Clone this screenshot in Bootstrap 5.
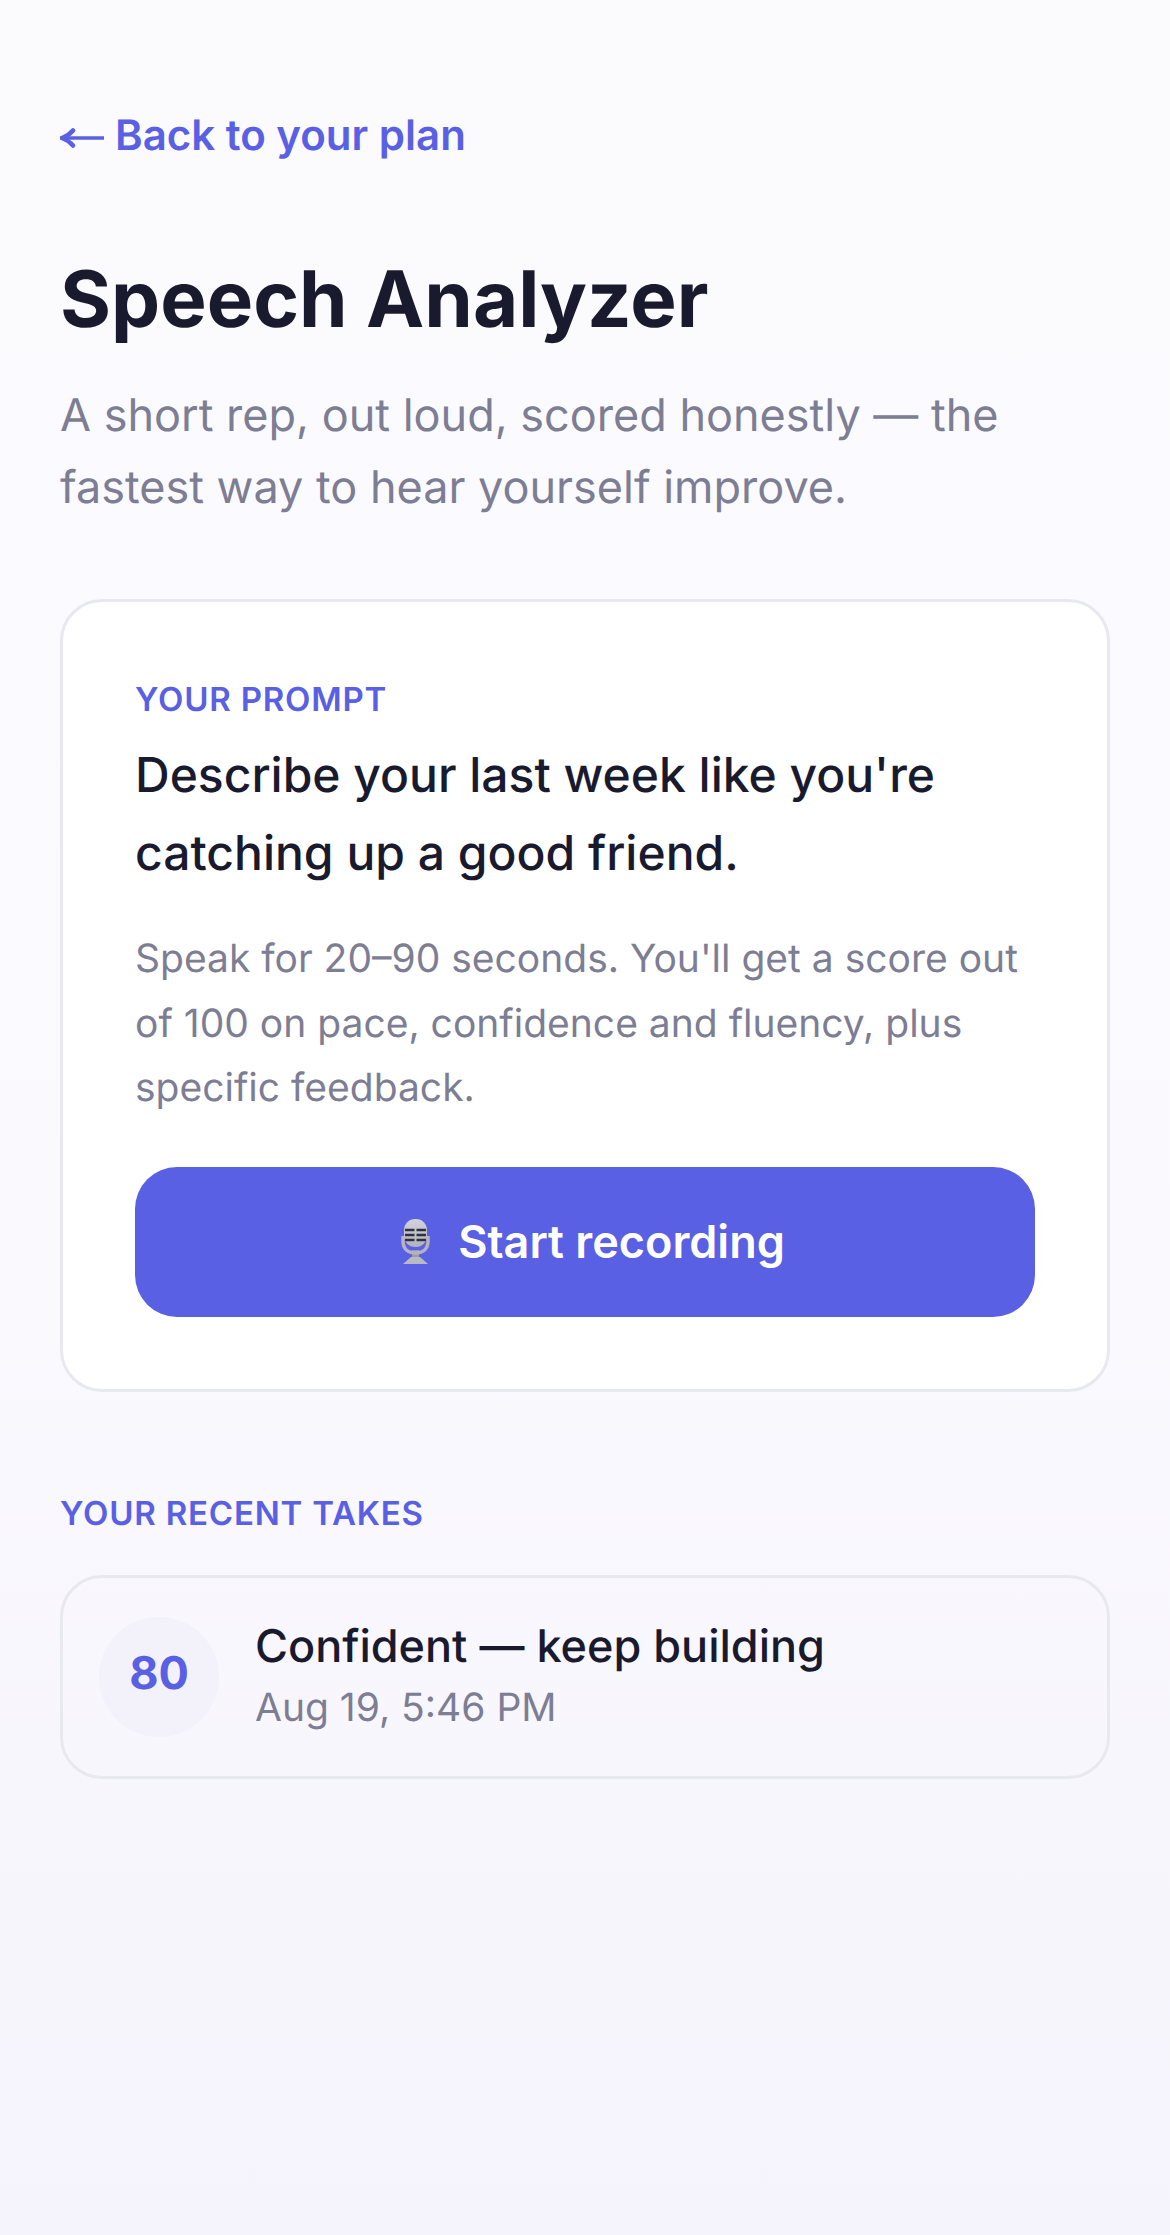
<!DOCTYPE html>
<html lang="en">
<head>
  <meta charset="UTF-8">
  <meta name="viewport" content="width=device-width, initial-scale=1.0">
  <title>Speech Analyzer</title>
  <link href="https://cdn.jsdelivr.net/npm/bootstrap@5.3.2/dist/css/bootstrap.min.css" rel="stylesheet">
  <style>
    body {
      font-family: Inter, "Liberation Sans", sans-serif;
      background: linear-gradient(180deg, #fbfbfe 0%, #faf9fe 60%, #f5f3fb 100%);
      color: #1a1a2e;
      min-height: 2235px;
      text-rendering: geometricPrecision;
    }
    .page-wrap { padding: 109px 60px 60px; }
    .back-link { color: #5a60e3; font-size: 42px; font-weight: 600; line-height: 54px; text-decoration: none; gap: 11px; }
    .back-arrow { margin-top: 3px; }
    .page-title { font-size: 78px; font-weight: 700; line-height: 94px; margin: 89px 0 0; }
    .page-sub { font-size: 45px; line-height: 72px; color: #7d7d94; margin: 33px 0 0; }
    .prompt-box { background: #fff; border: 3px solid #e8e8f0; border-radius: 42px; padding: 75px 72px 72px; margin-top: 76px; }
    .eyebrow { color: #5a60e3; font-size: 33px; font-weight: 600; letter-spacing: 0.8px; line-height: 44px; }
    .prompt-text { font-size: 48px; font-weight: 500; line-height: 78px; margin: 15px 0 0; }
    .prompt-note { font-size: 39px; line-height: 64.5px; color: #7d7d94; margin: 35px 0 0; }
    .rec-btn { background: #5a60e3; color: #fff; font-size: 45px; font-weight: 600; border: 0; border-radius: 42px; height: 150px; margin-top: 46px; gap: 27px; padding-left: 28px; }
    .rec-btn:hover { background: #5a60e3; color: #fff; }
    .takes-label { margin-top: 99px; }
    .take-row { border: 3px solid #e8e8f0; border-radius: 42px; padding: 39px 36px; margin-top: 40px; gap: 36px; }
    .score-dot { width: 120px; height: 120px; background: #f3f1fa; color: #5a60e3; font-size: 45px; font-weight: 700; padding-bottom: 8px; }
    .take-title { font-size: 45px; font-weight: 500; line-height: 58px; margin-top: -3px; }
    .take-date { font-size: 39px; color: #7d7d94; line-height: 50px; margin-top: 8px; }
  </style>
</head>
<body>
  <div class="page-wrap">
    <a href="#" class="back-link d-inline-flex align-items-center">
      <svg class="back-arrow" width="44" height="20" viewBox="0 0 44 20">
        <path d="M3 10H44" stroke="#5a60e3" stroke-width="3.500"/>
        <path d="M13 2.500C10 6 6 8.500 2 10c4 1.500 8 4 11 7.500" fill="none" stroke="#5a60e3" stroke-width="4.500" stroke-linecap="round"/>
      </svg>
      <span>Back to your plan</span>
    </a>
    <h1 class="page-title">Speech Analyzer</h1>
    <p class="page-sub">A short rep, out loud, scored honestly — the fastest way to hear yourself improve.</p>

    <div class="prompt-box">
      <div class="eyebrow">YOUR PROMPT</div>
      <p class="prompt-text">Describe your last week like you're catching up a good friend.</p>
      <p class="prompt-note">Speak for 20–90 seconds. You'll get a score out of 100 on pace, confidence and fluency, plus specific feedback.</p>
      <button type="button" class="btn rec-btn w-100 d-flex align-items-center justify-content-center">
        <svg width="30" height="45" viewBox="0 0 30 45">
          <defs>
            <linearGradient id="micHead" x1="0" y1="0" x2="0" y2="1">
              <stop offset="0" stop-color="#d3d3dc"/>
              <stop offset="1" stop-color="#b2b2bf"/>
            </linearGradient>
          </defs>
          <rect x="11" y="31" width="7" height="9" fill="#9c9caa"/>
          <path d="M10 38h9l8 7H2z" fill="#b9b9c4"/>
          <path d="M2 17v5c0 8 5 12 12.500 12S27 30 27 22v-5" fill="none" stroke="#b4b4c0" stroke-width="3.500"/>
          <rect x="3" y="0" width="23" height="28" rx="11" fill="url(#micHead)"/>
          <path d="M4 11h9.500M15.500 11h9.500M4 16h9.500M15.500 16h9.500M4 21h9.500M15.500 21h9.500" stroke="#30313c" stroke-width="2.500"/>
        </svg>
        <span>Start recording</span>
      </button>
    </div>

    <div class="eyebrow takes-label">YOUR RECENT TAKES</div>
    <div class="take-row d-flex align-items-center">
      <div class="score-dot rounded-circle d-flex align-items-center justify-content-center flex-shrink-0">80</div>
      <div>
        <div class="take-title">Confident — keep building</div>
        <div class="take-date">Aug 19, 5:46 PM</div>
      </div>
    </div>
  </div>

  <script src="https://cdn.jsdelivr.net/npm/bootstrap@5.3.2/dist/js/bootstrap.bundle.min.js"></script>
</body>
</html>
